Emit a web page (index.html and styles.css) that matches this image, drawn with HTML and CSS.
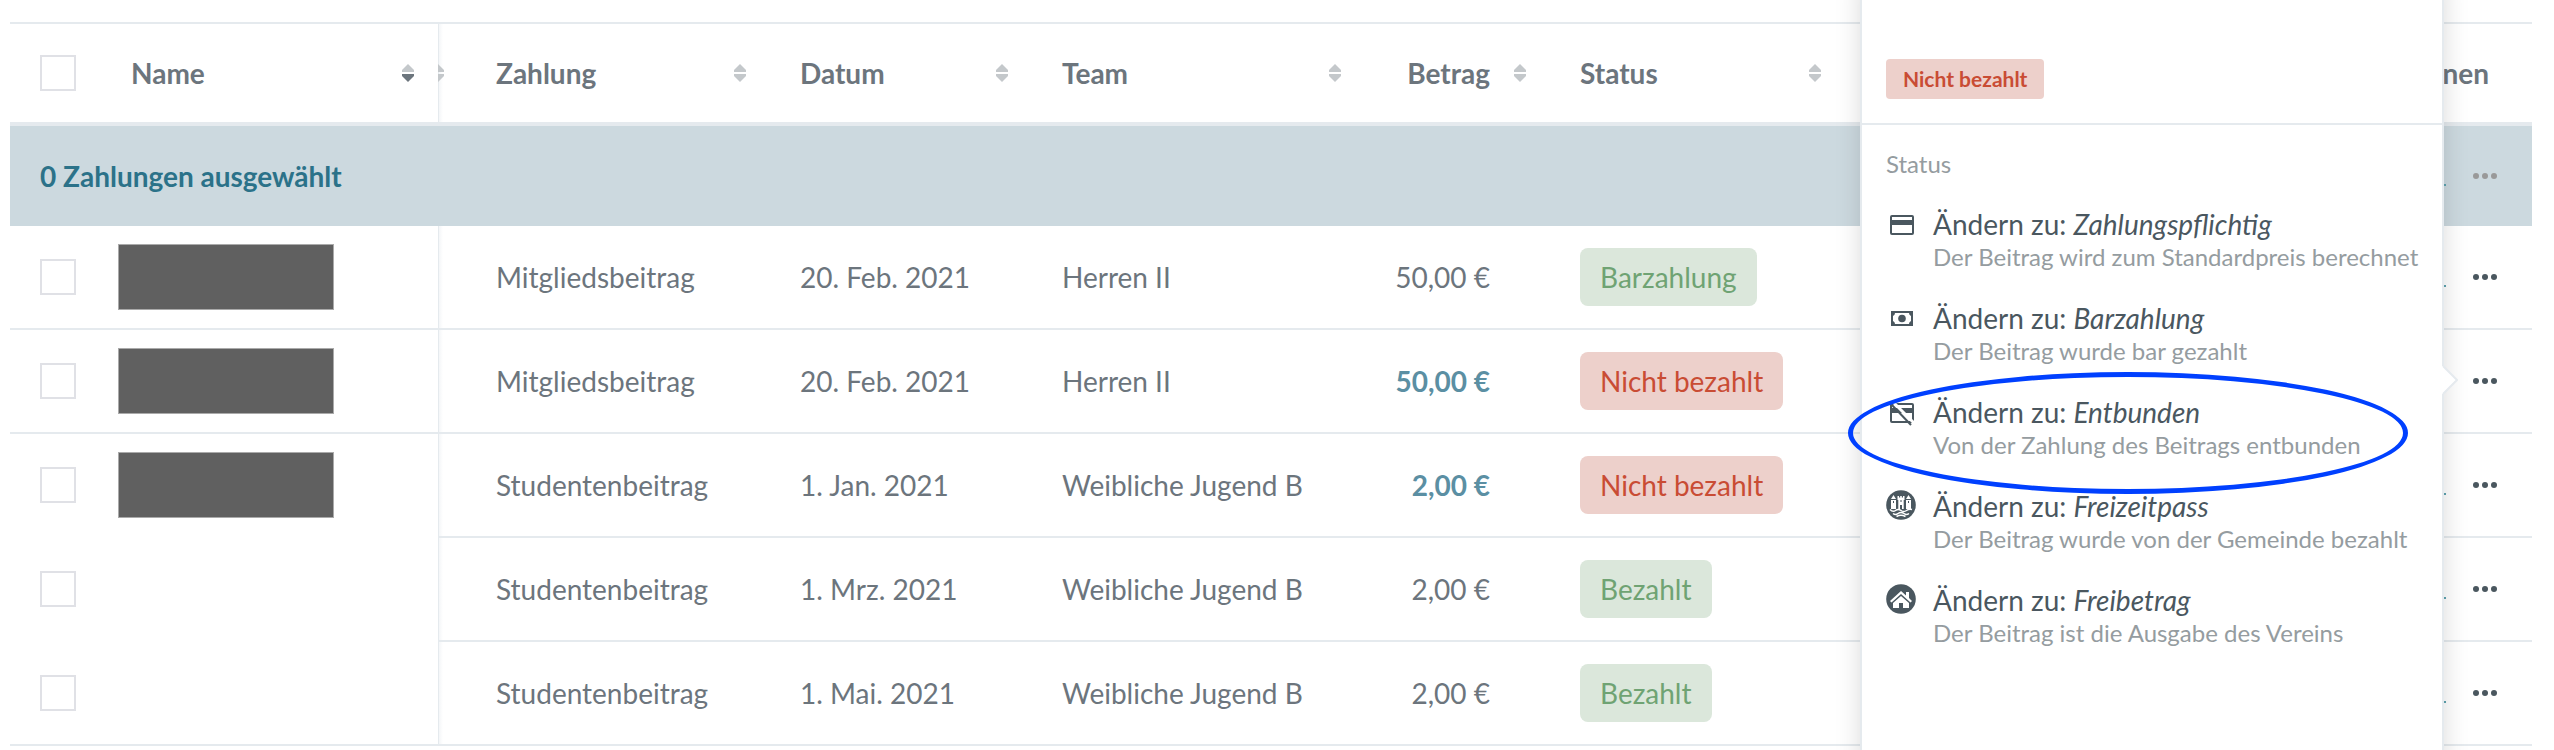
FILE: index.html
```
<!DOCTYPE html>
<html lang="de">

<head>
  <meta charset="UTF-8">
  <meta name="viewport" content="width=device-width, initial-scale=1.0">
  <title>Zahlungen</title>
  <link rel="stylesheet" href="styles.css">
</head>

<body>
  <!-- Icons -->
  <svg class="sprite" aria-hidden="true">
    <symbol id="sort" viewBox="0 0 12 18">
      <path class="up" d="M6 0L12 6V8H0V6Z" />
      <path class="down" d="M0 10H12V12L6 18L0 12Z" />
    </symbol>
    <symbol id="dots" viewBox="0 0 26 8">
      <circle cx="4" cy="4" r="3" />
      <circle cx="13" cy="4" r="3" />
      <circle cx="22" cy="4" r="3" />
    </symbol>
    <symbol id="mail" viewBox="0 0 24 24">
      <path d="M2 4H20V20H24V22H2Z" />
    </symbol>
  </svg>

  <main class="page">
    <table class="payments">
      <colgroup>
        <col class="col-check">
        <col class="col-name">
        <col class="col-type">
        <col class="col-date">
        <col class="col-team">
        <col class="col-amount">
        <col class="col-status">
        <col>
      </colgroup>
      <thead>
        <tr>
          <th class="check"><input type="checkbox" aria-label="Alle auswählen"></th>
          <th class="name">
            <div class="head">Name <svg class="sort active"><use href="#sort" /></svg></div>
          </th>
          <th class="type">
            <div class="head">
              <svg class="sort-cut" viewBox="6 0 6 18"><path d="M6 0L12 6V8H6ZM6 10H12V12L6 18Z" /></svg>
              Zahlung <svg class="sort"><use href="#sort" /></svg>
            </div>
          </th>
          <th><div class="head">Datum <svg class="sort"><use href="#sort" /></svg></div></th>
          <th><div class="head">Team <svg class="sort"><use href="#sort" /></svg></div></th>
          <th class="amount"><div class="head">Betrag <svg class="sort"><use href="#sort" /></svg></div></th>
          <th><div class="head">Status <svg class="sort"><use href="#sort" /></svg></div></th>
          <th class="actions">Aktionen</th>
        </tr>
      </thead>
      <tbody>
        <tr class="selection">
          <td colspan="7">0 Zahlungen ausgewählt</td>
          <td class="actions">
            <div class="buttons">
              <button class="mail" aria-label="Nachricht"><svg><use href="#mail" /></svg></button>
              <button class="more" aria-label="Mehr" disabled><svg><use href="#dots" /></svg></button>
            </div>
          </td>
        </tr>
        <tr>
          <td class="check"><input type="checkbox" aria-label="Auswählen"></td>
          <td class="name"><div class="hidden-name"></div></td>
          <td class="type">Mitgliedsbeitrag</td>
          <td>20. Feb. 2021</td>
          <td>Herren II</td>
          <td class="amount">50,00 €</td>
          <td><span class="badge paid">Barzahlung</span></td>
          <td class="actions">
            <div class="buttons">
              <button class="mail" aria-label="Nachricht"><svg><use href="#mail" /></svg></button>
              <button class="more" aria-label="Mehr"><svg><use href="#dots" /></svg></button>
            </div>
          </td>
        </tr>
        <tr>
          <td class="check"><input type="checkbox" aria-label="Auswählen"></td>
          <td class="name"><div class="hidden-name"></div></td>
          <td class="type">Mitgliedsbeitrag</td>
          <td>20. Feb. 2021</td>
          <td>Herren II</td>
          <td class="amount open">50,00 €</td>
          <td><span class="badge unpaid">Nicht bezahlt</span></td>
          <td class="actions">
            <div class="buttons">
              <button class="more" aria-label="Mehr"><svg><use href="#dots" /></svg></button>
            </div>
          </td>
        </tr>
        <tr class="merged">
          <td class="check"><input type="checkbox" aria-label="Auswählen"></td>
          <td class="name"><div class="hidden-name"></div></td>
          <td class="type">Studentenbeitrag</td>
          <td>1. Jan. 2021</td>
          <td>Weibliche Jugend B</td>
          <td class="amount open">2,00 €</td>
          <td><span class="badge unpaid">Nicht bezahlt</span></td>
          <td class="actions">
            <div class="buttons">
              <button class="mail" aria-label="Nachricht"><svg><use href="#mail" /></svg></button>
              <button class="more" aria-label="Mehr"><svg><use href="#dots" /></svg></button>
            </div>
          </td>
        </tr>
        <tr class="merged">
          <td class="check"><input type="checkbox" aria-label="Auswählen"></td>
          <td class="name"></td>
          <td class="type">Studentenbeitrag</td>
          <td>1. Mrz. 2021</td>
          <td>Weibliche Jugend B</td>
          <td class="amount">2,00 €</td>
          <td><span class="badge paid">Bezahlt</span></td>
          <td class="actions">
            <div class="buttons">
              <button class="mail" aria-label="Nachricht"><svg><use href="#mail" /></svg></button>
              <button class="more" aria-label="Mehr"><svg><use href="#dots" /></svg></button>
            </div>
          </td>
        </tr>
        <tr>
          <td class="check"><input type="checkbox" aria-label="Auswählen"></td>
          <td class="name"></td>
          <td class="type">Studentenbeitrag</td>
          <td>1. Mai. 2021</td>
          <td>Weibliche Jugend B</td>
          <td class="amount">2,00 €</td>
          <td><span class="badge paid">Bezahlt</span></td>
          <td class="actions">
            <div class="buttons">
              <button class="mail" aria-label="Nachricht"><svg><use href="#mail" /></svg></button>
              <button class="more" aria-label="Mehr"><svg><use href="#dots" /></svg></button>
            </div>
          </td>
        </tr>
      </tbody>
    </table>

    <!-- Menü der zweiten Zeile -->
    <div class="popover">
      <div class="popover-head">
        <span class="badge small unpaid">Nicht bezahlt</span>
      </div>
      <div class="popover-body">
        <div class="label">Status</div>
        <ul class="menu">
          <li>
            <button>
              <svg viewBox="0 0 30 30">
                <path fill-rule="evenodd" d="M6 6H26Q28 6 28 8V24Q28 26 26 26H6Q4 26 4 24V8Q4 6 6 6ZM6 8V11H26V8ZM6 16V24H26V16Z" />
              </svg>
              <span class="text">
                <span class="title">Ändern zu: <em>Zahlungspflichtig</em></span>
                <span class="desc">Der Beitrag wird zum Standardpreis berechnet</span>
              </span>
            </button>
          </li>
          <li>
            <button>
              <svg viewBox="0 0 30 30">
                <path fill-rule="evenodd" d="M5 8H27V23H5ZM9 10Q9 12 7 13V18Q9 19 9 21H23Q23 19 25 18V13Q23 12 23 10Z" />
                <circle cx="16" cy="15.5" r="3.8" />
              </svg>
              <span class="text">
                <span class="title">Ändern zu: <em>Barzahlung</em></span>
                <span class="desc">Der Beitrag wurde bar gezahlt</span>
              </span>
            </button>
          </li>
          <li>
            <button>
              <svg viewBox="0 0 30 30">
                <path fill-rule="evenodd" d="M6 6H26Q28 6 28 8V24Q28 26 26 26H6Q4 26 4 24V8Q4 6 6 6ZM6 8V11H26V8ZM6 16V24H26V16Z" />
                <path class="gap" d="M6 4L28 26" />
                <path class="slash" d="M4 6L25 28" />
              </svg>
              <span class="text">
                <span class="title">Ändern zu: <em>Entbunden</em></span>
                <span class="desc">Von der Zahlung des Beitrags entbunden</span>
              </span>
            </button>
          </li>
          <li>
            <button>
              <svg viewBox="0 0 30 30">
                <circle cx="15" cy="14" r="14.8" />
                <!-- Türme -->
                <path class="white" d="M5 8L7.500 4L10 8V18H5ZM20 8L22.500 4L25 8V18H20Z" />
                <path class="white" d="M11.500 5H13V6.500H14.200V5H15.800V6.500H17V5H18.500V9H17.700V18H16V14H14V18H12.300V9H11.500Z" />
                <path class="line" d="M7.500 10V12M22.500 10V12M5 8.500H10M20 8.500H25M15 9V11" />
                <!-- Wellen -->
                <path class="wave" d="M4 18.500Q6.800 21.500 9.500 19.500Q12.200 17.500 15 19.500Q17.800 21.500 20.500 19.500Q23.200 17.500 26 18.500M7 22.500Q9.500 24.500 12 22.500Q15 20.500 18 22.500Q20.500 24.500 23 22.500M10.500 25.500Q15 22.800 19.500 25.500" />
              </svg>
              <span class="text">
                <span class="title">Ändern zu: <em>Freizeitpass</em></span>
                <span class="desc">Der Beitrag wurde von der Gemeinde bezahlt</span>
              </span>
            </button>
          </li>
          <li>
            <button>
              <svg viewBox="0 0 30 30">
                <circle cx="15" cy="14" r="14.8" />
                <path class="white" d="M15 6L20 10.500V7H23V13L26 16L24.500 17.500L15 9L5.500 17.500L4 16Z" />
                <path class="white" d="M15 11L23 18V23H17V18H13V23H7V18Z" />
              </svg>
              <span class="text">
                <span class="title">Ändern zu: <em>Freibetrag</em></span>
                <span class="desc">Der Beitrag ist die Ausgabe des Vereins</span>
              </span>
            </button>
          </li>
        </ul>
      </div>
      <svg class="arrow" viewBox="0 0 16 32">
        <path d="M0 2H1L15 16L1 30H0Z" />
        <path class="edge" d="M1 2L15 16L1 30" />
      </svg>
      <div class="marker"></div>
    </div>
  </main>
</body>

</html>
```
FILE: styles.css
```
* {
  margin: 0;
  padding: 0;
  box-sizing: border-box;
}

body {
  font-family: Lato, sans-serif;
  font-size: 28px;
  line-height: 34px;
  color: #6c757d;
  background-color: #fff;
}

button {
  font: inherit;
  color: inherit;
  border: none;
  background: none;
  cursor: pointer;
}

.sprite {
  display: none;
}

.page {
  position: relative;
  min-height: 100vh;
  padding: 22px 22px 0 10px;
  overflow: hidden;
}

/* Tabelle */
.payments {
  width: 100%;
  table-layout: fixed;
  border-collapse: separate;
  border-spacing: 0;
}

.col-check {
  width: 93px;
}

.col-name {
  width: 335px;
}

.col-type {
  width: 332px;
}

.col-date {
  width: 262px;
}

.col-team {
  width: 333px;
}

.col-amount {
  width: 185px;
}

.col-status {
  width: 295px;
}

th,
td {
  height: 104px;
  padding-left: 30px;
  text-align: left;
  vertical-align: middle;
  white-space: nowrap;
  border-bottom: 2px solid #e5eaee;
}

th {
  font-weight: 700;
  border-top: 2px solid #e5eaee;
  border-bottom: 4px solid #e5eaee;
}

.head {
  display: flex;
  align-items: center;
  justify-content: space-between;
  padding-right: 24px;
}

.sort {
  width: 12px;
  height: 18px;
  fill: #c4c8cb;
  --down: #c4c8cb;
}

.sort.active {
  --down: #6c757d;
}

.down {
  fill: var(--down);
}

.type .head {
  gap: 52px;
}

.type .head .sort {
  margin-left: auto;
}

.sort-cut {
  width: 6px;
  height: 18px;
  fill: #c4c8cb;
}

.check input {
  display: block;
  appearance: none;
  width: 36px;
  height: 36px;
  border: 2px solid #e0e1e6;
  background-color: #fff;
}

.name {
  padding-left: 15px;
}

th.name {
  padding-left: 28px;
}

.hidden-name {
  width: 216px;
  height: 66px;
  border: 1px solid #aaa;
  background-color: #606060;
}

/* Kante der fixierten Spalte */
.type {
  padding-left: 58px;
  background-image: linear-gradient(to right, #e5eaee 1px, #f4f6f8 1px, #fff 5px);
}

th.type {
  padding-left: 0;
}

.amount {
  padding-left: 0;
  padding-right: 60px;
  text-align: right;
}

th.amount {
  padding-right: 0;
}

.amount .head {
  justify-content: flex-end;
  gap: 24px;
}

.amount.open {
  font-weight: 700;
  color: #5b8fa3;
}

.actions {
  padding-right: 34px;
  text-align: right;
}

th.actions {
  padding-right: 43px;
}

.merged .check,
.merged .name {
  border-bottom-color: transparent;
}

.selection td {
  height: 100px;
  font-weight: 700;
  color: #2b7289;
  border: none;
  background-color: #ccd9df;
}

.buttons {
  display: flex;
  align-items: center;
  justify-content: flex-end;
  gap: 26px;
}

.buttons button {
  display: flex;
}

.mail svg {
  width: 24px;
  height: 24px;
  fill: #5fa3b0;
}

.more svg {
  width: 26px;
  height: 8px;
  fill: #4a575f;
}

.more:disabled svg {
  fill: #999;
}

.badge {
  display: inline-block;
  padding: 12px 20px;
  border-radius: 8px;
  vertical-align: middle;
}

.badge.small {
  padding: 6px 17px;
  font-size: 21px;
  font-weight: 700;
  line-height: 28px;
  border-radius: 4px;
}

.paid {
  color: #6fa373;
  background-color: #dbe7db;
}

.unpaid {
  color: #c94c34;
  background-color: #edd0cb;
}

/* Popover */
.popover {
  position: absolute;
  top: -20px;
  right: 110px;
  bottom: -20px;
  width: 584px;
  color: #4a575f;
  background-color: #fff;
  border: 2px solid #e5eaee;
  box-shadow: 0 0 24px rgba(0, 0, 0, 0.15);
}

.popover-head {
  display: flex;
  padding: 77px 24px 24px;
  border-bottom: 2px solid #e5eaee;
}

.popover-body {
  padding: 24px 24px 0;
}

.label {
  font-size: 24px;
  line-height: 30px;
  color: #959ca0;
}

.menu {
  margin-top: 28px;
  list-style: none;
}

.menu li {
  margin-bottom: 28px;
}

.menu button {
  display: flex;
  gap: 17px;
  text-align: left;
  white-space: nowrap;
}

.menu svg {
  flex: none;
  width: 30px;
  height: 30px;
  margin-top: 2px;
  fill: #4a575f;
  overflow: visible;
}

.menu .gap {
  stroke: #fff;
  stroke-width: 3;
}

.menu .slash {
  stroke: #4a575f;
  stroke-width: 2;
}

.menu .white {
  fill: #fff;
}

.menu .wave {
  fill: none;
  stroke: #fff;
  stroke-width: 1.5;
}

.menu .line {
  stroke: #4a575f;
  stroke-width: 1;
}

.text {
  display: flex;
  flex-direction: column;
}

.title {
  line-height: 34px;
}

.desc {
  font-size: 24px;
  line-height: 32px;
  color: #959ca0;
}

.arrow {
  position: absolute;
  top: 382px;
  right: -16px;
  width: 16px;
  height: 32px;
  fill: #fff;
}

.arrow .edge {
  fill: none;
  stroke: #e5eaee;
  stroke-width: 2;
}

/* Hervorhebung */
.marker {
  position: absolute;
  top: 390px;
  left: -14px;
  width: 560px;
  height: 122px;
  border: 5px solid #0040ff;
  border-radius: 50%;
  pointer-events: none;
}
```
